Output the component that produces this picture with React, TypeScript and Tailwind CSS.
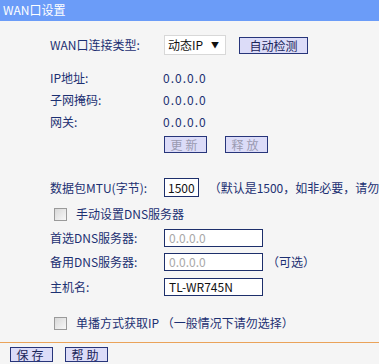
const FONT = { fontFamily: '"Noto Sans CJK SC", "DejaVu Sans", sans-serif' };

function Checkbox() {
  return <span className="inline-block w-[13px] h-[13px] border border-[#9a9a9a] bg-gradient-to-br from-[#d8d8d8] to-[#f8f8f8]" />;
}

function Btn({ label, disabled, wide, short }: { label: string; disabled?: boolean; wide?: boolean; short?: boolean }) {
  return (
    <button
      className={`${short ? 'h-[15px] leading-[13px]' : 'h-[17px] leading-[15px]'} ${wide ? 'w-[69px] tracking-normal' : 'w-[43px] tracking-[3px]'} border border-[#27357a] bg-[#dcdcf8] text-[12px] ${disabled ? 'text-[#9a9ab0]' : 'text-[#1a2458]'}`}
    >
      {label}
    </button>
  );
}

function Row({ label, children, className = '' }: { label: string; children?: React.ReactNode; className?: string }) {
  return (
    <div className={`flex items-center ${className}`}>
      <span className="w-[113px] shrink-0">{label}</span>
      {children}
    </div>
  );
}

function TextBox({ value, muted }: { value: string; muted?: boolean }) {
  return (
    <div className={`w-[99px] h-[18px] border border-[#1d2f6b] bg-white px-[4px] text-[12px] leading-[16px] ${muted ? 'text-[#a8a8a8]' : 'text-[#111]'}`}>
      {value}
    </div>
  );
}

export default function App() {
  return (
    <div style={FONT} className="w-[379px] h-[364px] overflow-hidden bg-[#f5f5f5] text-[12px] text-[#1c3072]">
      <div className="h-[21px] bg-[#6b9cf8] text-white text-[12px] leading-[20px] pl-[3px]">WAN口设置</div>

      <div className="pl-[50px]">
        <Row label="WAN口连接类型:" className="mt-[14px] h-[20px]">
          <div className="ml-[1px] w-[62px] h-[20px] bg-white border border-[#d8d8d8] flex items-center justify-between px-[3px] text-[#111]">
            <span>动态IP</span>
            <span className="text-[8px] mr-[3px]">▼</span>
          </div>
          <div className="ml-[13px] mt-[2px]"><Btn label="自动检测" wide /></div>
        </Row>

        <div className="mt-[12px]">
          {[['IP地址:', '0.0.0.0'], ['子网掩码:', '0.0.0.0'], ['网关:', '0.0.0.0']].map(([l, v]) => (
            <Row key={l} label={l} className="h-[22px]">
              <span className="tracking-[1px]">{v}</span>
            </Row>
          ))}
        </div>

        <div className="mt-[3px] flex gap-[18px] pl-[114px]">
          <Btn label="更新" disabled />
          <Btn label="释放" disabled />
        </div>

        <Row label="数据包MTU(字节):" className="mt-[25px] h-[19px]">
          <div className="ml-[1px] w-[40px] h-[19px] border border-[#1d2f6b] bg-white px-[3px] leading-[17px] text-[#111]">1500</div>
          <span className="ml-[10px] whitespace-nowrap">（默认是1500，如非必要，请勿修改）</span>
        </Row>

        <div className="mt-[8px] h-[18px] flex items-center pl-[4px] gap-[9px]">
          <Checkbox />
          <span>手动设置DNS服务器</span>
        </div>

        <Row label="首选DNS服务器:" className="mt-[6px] h-[18px]">
          <div className="ml-[1px]"><TextBox value="0.0.0.0" muted /></div>
        </Row>
        <Row label="备用DNS服务器:" className="mt-[6px] h-[18px]">
          <div className="ml-[1px]"><TextBox value="0.0.0.0" muted /></div>
          <span className="ml-[4px]">（可选）</span>
        </Row>
        <Row label="主机名:" className="mt-[7px] h-[18px]">
          <div className="ml-[1px]"><TextBox value="TL-WR745N" /></div>
        </Row>

        <div className="mt-[18px] h-[18px] flex items-center pl-[4px] gap-[9px] whitespace-nowrap">
          <Checkbox />
          <span>单播方式获取IP （一般情况下请勿选择）</span>
        </div>
      </div>

      <div className="mt-[10px] h-px bg-[#eaa35a]" />
      <div className="mt-[4px] pl-[10px] flex gap-[12px]">
        <Btn label="保存" short />
        <Btn label="帮助" short />
      </div>
    </div>
  );
}
